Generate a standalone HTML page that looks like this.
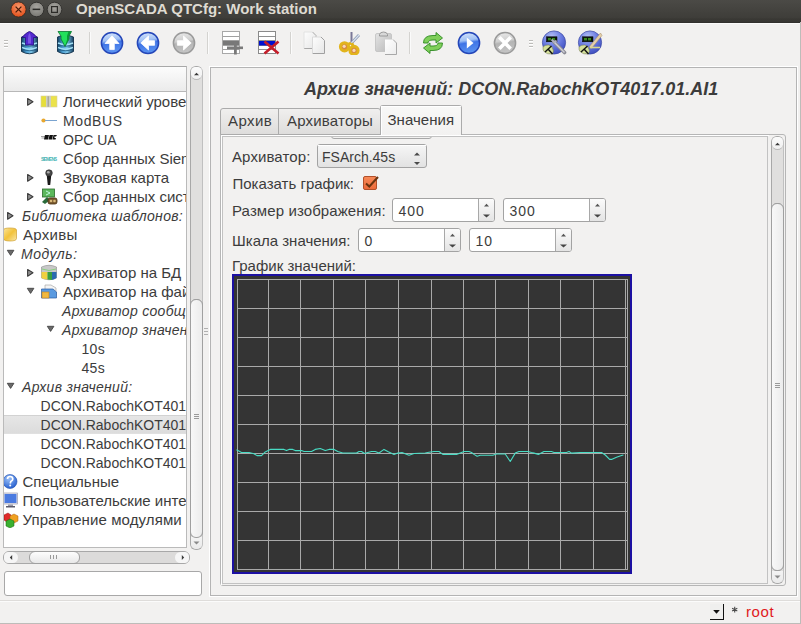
<!DOCTYPE html>
<html><head><meta charset="utf-8"><title>OpenSCADA QTCfg</title>
<style>
*{margin:0;padding:0;box-sizing:border-box}
html,body{width:801px;height:624px;overflow:hidden;background:#f2f1f0;font-family:"Liberation Sans",sans-serif;color:#3c3c3c;position:relative}
.a{position:absolute}
.t{position:absolute;white-space:nowrap}
</style></head><body>

<div class="a" style="left:0px;top:0px;width:801px;height:23px;background:linear-gradient(#4b4a46,#3e3d39 78%,#383733 82%,#3a3935 92%,#2f2e2b)"></div>
<div class="a" style="left:0px;top:23px;width:801px;height:1px;background:#fbfbfa"></div>
<svg class="a" style="left:0px;top:0px" width="70" height="22" viewBox="0 0 70 22">
<defs>
<radialGradient id="gc" cx="50%" cy="35%" r="60%"><stop offset="0" stop-color="#f99a6f"/><stop offset="1" stop-color="#e4531e"/></radialGradient>
<radialGradient id="gg" cx="50%" cy="35%" r="60%"><stop offset="0" stop-color="#a8a6a1"/><stop offset="1" stop-color="#7c7b76"/></radialGradient>
</defs>
<circle cx="18.5" cy="9.5" r="7.6" fill="url(#gc)" stroke="#3a2a22" stroke-width="0.9"/>
<path d="M15.6 6.6 L21.4 12.4 M21.4 6.6 L15.6 12.4" stroke="#4a1a08" stroke-width="1.3"/>
<circle cx="36.6" cy="9.5" r="7.3" fill="url(#gg)" stroke="#2e2d2a" stroke-width="0.9"/>
<rect x="32.6" y="8.6" width="7.6" height="1.5" fill="#2c2b28"/>
<circle cx="54.5" cy="9.5" r="7.3" fill="url(#gg)" stroke="#2e2d2a" stroke-width="0.9"/>
<rect x="51.6" y="6.6" width="5.8" height="5.8" fill="none" stroke="#2c2b28" stroke-width="1.2"/>
</svg>
<div class="t" style="left:76px;top:-1px;font-size:15px;line-height:19px;font-weight:bold;font-style:normal;color:#dfdbd2;letter-spacing:0px;">OpenSCADA QTCfg: Work station</div>
<div class="a" style="left:4px;top:40px;width:4px;height:1px;background:#bdbcb9"></div>
<div class="a" style="left:4px;top:41px;width:4px;height:1px;background:#ffffff"></div>
<div class="a" style="left:4px;top:43px;width:4px;height:1px;background:#bdbcb9"></div>
<div class="a" style="left:4px;top:44px;width:4px;height:1px;background:#ffffff"></div>
<div class="a" style="left:4px;top:46px;width:4px;height:1px;background:#bdbcb9"></div>
<div class="a" style="left:4px;top:47px;width:4px;height:1px;background:#ffffff"></div>
<div class="a" style="left:89px;top:32px;width:1px;height:22px;background:#d4d3d0"></div>
<div class="a" style="left:90px;top:32px;width:1px;height:22px;background:#fbfbfb"></div>
<div class="a" style="left:207px;top:32px;width:1px;height:22px;background:#d4d3d0"></div>
<div class="a" style="left:208px;top:32px;width:1px;height:22px;background:#fbfbfb"></div>
<div class="a" style="left:290px;top:32px;width:1px;height:22px;background:#d4d3d0"></div>
<div class="a" style="left:291px;top:32px;width:1px;height:22px;background:#fbfbfb"></div>
<div class="a" style="left:409px;top:32px;width:1px;height:22px;background:#d4d3d0"></div>
<div class="a" style="left:410px;top:32px;width:1px;height:22px;background:#fbfbfb"></div>
<div class="a" style="left:529px;top:40px;width:4px;height:1px;background:#bdbcb9"></div>
<div class="a" style="left:529px;top:41px;width:4px;height:1px;background:#ffffff"></div>
<div class="a" style="left:529px;top:43px;width:4px;height:1px;background:#bdbcb9"></div>
<div class="a" style="left:529px;top:44px;width:4px;height:1px;background:#ffffff"></div>
<div class="a" style="left:529px;top:46px;width:4px;height:1px;background:#bdbcb9"></div>
<div class="a" style="left:529px;top:47px;width:4px;height:1px;background:#ffffff"></div>
<svg class="a" style="left:20px;top:31px" width="19" height="24" viewBox="0 0 19 24">
<defs>
<linearGradient id="cyl1" x1="0" x2="1"><stop offset="0" stop-color="#123e5e"/><stop offset="0.3" stop-color="#4a9cd0"/><stop offset="0.6" stop-color="#7cc6ea"/><stop offset="1" stop-color="#143c5c"/></linearGradient>
</defs>
<path d="M1.5 6 Q9.5 2.5 17.5 6 L17.5 20.5 Q9.5 25 1.5 20.5 Z" fill="url(#cyl1)" stroke="#0e2e48" stroke-width="0.9"/>
<path d="M2 12 Q9.5 15.5 17 12 M2 16.5 Q9.5 20 17 16.5" stroke="#a4e0f6" stroke-width="1.4" fill="none"/>
<path d="M2 13.5 Q9.5 17 17 13.5 M2 18 Q9.5 21.5 17 18" stroke="#205a80" stroke-width="0.8" fill="none"/>
<path d="M9.5 0.3 Q13.5 2 17 6.5 L13.5 6.5 L13.5 14 L5.5 14 L5.5 6.5 L2 6.5 Q5.5 2 9.5 0.3 Z" fill="#5428d0" stroke="#24107a" stroke-width="0.8"/><path d="M9.5 2 Q8 4 8 7 L8 12.5 L11 12.5 L11 7 Q11 4 9.5 2 Z" fill="#9a7cf4" opacity="0.55"/></svg>
<svg class="a" style="left:56px;top:31px" width="19" height="24" viewBox="0 0 19 24">
<defs>
<linearGradient id="cyl2" x1="0" x2="1"><stop offset="0" stop-color="#123e5e"/><stop offset="0.3" stop-color="#4a9cd0"/><stop offset="0.6" stop-color="#7cc6ea"/><stop offset="1" stop-color="#143c5c"/></linearGradient>
</defs>
<path d="M1.5 6 Q9.5 2.5 17.5 6 L17.5 20.5 Q9.5 25 1.5 20.5 Z" fill="url(#cyl2)" stroke="#0e2e48" stroke-width="0.9"/>
<path d="M2 12 Q9.5 15.5 17 12 M2 16.5 Q9.5 20 17 16.5" stroke="#a4e0f6" stroke-width="1.4" fill="none"/>
<path d="M2 13.5 Q9.5 17 17 13.5 M2 18 Q9.5 21.5 17 18" stroke="#205a80" stroke-width="0.8" fill="none"/>
<path d="M2 0.5 L15.5 0.5 L13 5 L13 8 L9 15.5 L5 8 L5 5 Z" fill="#22e05c" stroke="#0c7030" stroke-width="0.8"/><path d="M9 15.5 L13 8 L13 5 L15.5 0.5 L12.5 0.5 L11 5 L11 9 Z" fill="#0c9838"/></svg>
<svg class="a" style="left:100px;top:31px" width="24" height="24" viewBox="0 0 24 24"><defs><linearGradient id="ci112" x1="0" x2="0.15" y1="0" y2="1"><stop offset="0" stop-color="#dce9fc"/><stop offset="0.42" stop-color="#9fc0f4"/><stop offset="0.55" stop-color="#3f74e6"/><stop offset="1" stop-color="#5a92f0"/></linearGradient></defs>
<circle cx="12" cy="12" r="10.6" fill="url(#ci112)" stroke="#2446b8" stroke-width="1.5"/><path d="M12 4.8 L19 12.5 L14.3 12.5 L14.3 18.6 L9.7 18.6 L9.7 12.5 L5 12.5 Z" fill="#ffffff" stroke="#ffffff" stroke-width="0.8" stroke-linejoin="round"/></svg>
<svg class="a" style="left:136px;top:31px" width="24" height="24" viewBox="0 0 24 24"><defs><linearGradient id="ci148" x1="0" x2="0.15" y1="0" y2="1"><stop offset="0" stop-color="#dce9fc"/><stop offset="0.42" stop-color="#9fc0f4"/><stop offset="0.55" stop-color="#3f74e6"/><stop offset="1" stop-color="#5a92f0"/></linearGradient></defs>
<circle cx="12" cy="12" r="10.6" fill="url(#ci148)" stroke="#2446b8" stroke-width="1.5"/><path d="M4.8 12 L12.5 5 L12.5 9.7 L18.6 9.7 L18.6 14.3 L12.5 14.3 L12.5 19 Z" fill="#ffffff" stroke="#ffffff" stroke-width="0.8" stroke-linejoin="round"/></svg>
<svg class="a" style="left:172px;top:31px" width="24" height="24" viewBox="0 0 24 24"><defs><linearGradient id="ci184" x1="0" x2="0.15" y1="0" y2="1"><stop offset="0" stop-color="#ececec"/><stop offset="0.45" stop-color="#cfcfcf"/><stop offset="0.55" stop-color="#b4b4b4"/><stop offset="1" stop-color="#c4c4c4"/></linearGradient></defs>
<circle cx="12" cy="12" r="10.6" fill="url(#ci184)" stroke="#9a9a9a" stroke-width="1.5"/><path d="M19.2 12 L11.5 5 L11.5 9.7 L5.4 9.7 L5.4 14.3 L11.5 14.3 L11.5 19 Z" fill="#ffffff" stroke="#ffffff" stroke-width="0.8" stroke-linejoin="round"/></svg>
<svg class="a" style="left:222px;top:31px" width="22" height="24" viewBox="0 0 22 24">
<rect x="0.5" y="0.5" width="17" height="22" fill="#ffffff" stroke="#a8a8a8" stroke-width="1"/>
<rect x="1" y="5" width="16" height="1" fill="#a0a0a0"/><rect x="1" y="9" width="16" height="1" fill="#a0a0a0"/>
<rect x="1" y="14" width="16" height="1" fill="#a0a0a0"/><rect x="1" y="18" width="16" height="1" fill="#a0a0a0"/>
<rect x="1" y="10" width="16" height="4" fill="#787878"/>
<rect x="5" y="15.5" width="16" height="2.6" fill="#7a7a7a"/>
<rect x="12" y="11.5" width="2.8" height="12" fill="#7a7a7a"/>
</svg>
<svg class="a" style="left:258px;top:31px" width="22" height="24" viewBox="0 0 22 24">
<rect x="0.5" y="0.5" width="17" height="22" fill="#ffffff" stroke="#8a8a8a" stroke-width="1"/>
<rect x="1" y="5" width="16" height="1" fill="#909090"/><rect x="1" y="9" width="16" height="1" fill="#909090"/>
<rect x="1" y="14" width="16" height="1" fill="#909090"/><rect x="1" y="18" width="16" height="1" fill="#909090"/>
<rect x="1" y="10" width="16" height="4.5" fill="#0010d0"/>
<path d="M6.5 10.5 L20.5 22.5 M20.5 10.5 L6.5 22.5" stroke="#c41e2a" stroke-width="2.6"/>
</svg>
<svg class="a" style="left:302px;top:31px" width="24" height="24" viewBox="0 0 24 24">
<defs><linearGradient id="pg1" x1="0" x2="1" y1="0" y2="1"><stop offset="0" stop-color="#fdfdfd"/><stop offset="1" stop-color="#e6e6e6"/></linearGradient></defs>
<path d="M2 1 L10.5 1 L14 4.5 L14 17.5 L2 17.5 Z" fill="url(#pg1)"/>
<path d="M10.5 1 L14 4.5 L14 17.5 L2 17.5" fill="none" stroke="#a8a8a8" stroke-width="1"/>
<path d="M2 17.5 L2 1 L10.5 1" fill="none" stroke="#e2e2e2" stroke-width="1"/>
<path d="M10.5 6 L19 6 L22.5 9.5 L22.5 22.5 L10.5 22.5 Z" fill="url(#pg1)"/>
<path d="M19 6 L22.5 9.5 L22.5 22.5 L10.5 22.5" fill="none" stroke="#a0a0a0" stroke-width="1"/>
<path d="M10.5 22.5 L10.5 6 L19 6" fill="none" stroke="#dadada" stroke-width="1"/>
</svg>
<svg class="a" style="left:338px;top:31px" width="24" height="24" viewBox="0 0 24 24">
<path d="M13.5 1 L13.5 12" stroke="#7a7898" stroke-width="2"/>
<path d="M21 4 L13.5 12" stroke="#8a96b0" stroke-width="2.8"/>
<path d="M21 4 L13.5 12" stroke="#d8e2f0" stroke-width="1.2"/>
<path d="M13 12 L9 14 M13.8 12 L15.5 16" stroke="#e0b21a" stroke-width="3"/>
<circle cx="6.5" cy="15.8" r="4.1" fill="#d88a40" stroke="#e2b41c" stroke-width="3"/>
<circle cx="16" cy="19.4" r="4.1" fill="#d88a40" stroke="#e2b41c" stroke-width="3"/>
<circle cx="6.2" cy="15.3" r="1.6" fill="#f6d8b8"/>
<circle cx="16" cy="19.4" r="1.6" fill="#f6d8b8"/>
</svg>
<svg class="a" style="left:374px;top:31px" width="24" height="24" viewBox="0 0 24 24">
<defs><linearGradient id="cbd" x1="0" x2="1" y1="0" y2="1"><stop offset="0" stop-color="#e4e4e4"/><stop offset="1" stop-color="#b8b8b8"/></linearGradient>
<linearGradient id="pg2" x1="0" x2="1" y1="0" y2="1"><stop offset="0" stop-color="#ffffff"/><stop offset="1" stop-color="#ececec"/></linearGradient></defs>
<rect x="1.5" y="2.5" width="16" height="18" rx="1.5" fill="url(#cbd)" stroke="#c0c0c0" stroke-width="0.8"/>
<path d="M5.5 5 L5.5 3.5 Q6 1 9.5 1 Q13 1 13.5 3.5 L13.5 5 Z" fill="#d8d8d8" stroke="#8a8a8a" stroke-width="0.8"/>
<path d="M11 8.5 L19 8.5 L22.5 12 L22.5 23.5 L11 23.5 Z" fill="url(#pg2)"/>
<path d="M19 8.5 L22.5 12 L22.5 23.5 L11 23.5" fill="none" stroke="#a8a8a8" stroke-width="1"/>
</svg>
<svg class="a" style="left:421px;top:31px" width="24" height="24" viewBox="0 0 24 24">
<path d="M2.5 12 Q2.5 4.5 12 4.5 L15 4.5 L15 1.5 L21.5 7 L15 12 L15 9 L12 9 Q7 9 7 12 Z" fill="#7fcf5a" stroke="#2f8a22" stroke-width="0.9"/>
<path d="M21.5 12 Q21.5 19.5 12 19.5 L9 19.5 L9 22.5 L2.5 17 L9 12 L9 15 L12 15 Q17 15 17 12 Z" fill="#7fcf5a" stroke="#2f8a22" stroke-width="0.9"/>
</svg>
<svg class="a" style="left:457px;top:31px" width="24" height="24" viewBox="0 0 24 24"><defs><linearGradient id="ci469" x1="0" x2="0.15" y1="0" y2="1"><stop offset="0" stop-color="#dce9fc"/><stop offset="0.42" stop-color="#9fc0f4"/><stop offset="0.55" stop-color="#3f74e6"/><stop offset="1" stop-color="#5a92f0"/></linearGradient></defs>
<circle cx="12" cy="12" r="10.6" fill="url(#ci469)" stroke="#2446b8" stroke-width="1.5"/><path d="M9.8 6.5 L16.5 12 L9.8 17.5 Z" fill="#ffffff"/></svg>
<svg class="a" style="left:493px;top:31px" width="24" height="24" viewBox="0 0 24 24"><defs><linearGradient id="ci505" x1="0" x2="0.15" y1="0" y2="1"><stop offset="0" stop-color="#ececec"/><stop offset="0.45" stop-color="#cfcfcf"/><stop offset="0.55" stop-color="#b4b4b4"/><stop offset="1" stop-color="#c4c4c4"/></linearGradient></defs>
<circle cx="12" cy="12" r="10.6" fill="url(#ci505)" stroke="#9a9a9a" stroke-width="1.5"/><path d="M7.6 7.6 L16.4 16.4 M16.4 7.6 L7.6 16.4" stroke="#ffffff" stroke-width="3.6" stroke-linecap="square"/></svg>
<svg class="a" style="left:541px;top:30px" width="26" height="26" viewBox="0 0 26 26"><defs><radialGradient id="bb541" cx="40%" cy="25%" r="75%"><stop offset="0" stop-color="#b4c0f4"/><stop offset="0.5" stop-color="#6f80e4"/><stop offset="1" stop-color="#4050c0"/></radialGradient></defs>
<circle cx="13" cy="12.5" r="11.6" fill="url(#bb541)" stroke="#3a46a0" stroke-width="0.7"/>
<rect x="5.5" y="6.8" width="10.5" height="5" fill="#0c1a0c" stroke="#000" stroke-width="0.5"/>
<rect x="7" y="8" width="3" height="2.4" fill="#3a8a20"/><rect x="11" y="8" width="3" height="2.4" fill="#3a8a20"/>
<path d="M2 17 Q4 14.5 8 15 Q12 16.5 12.5 21 L11.5 24 Q6 24.5 3.5 22 Q1.5 20 2 17 Z" fill="#d4e09a" stroke="#6a7040" stroke-width="0.5"/>
<path d="M4 22 L10.5 16 M7 19 L11.5 24" stroke="#111" stroke-width="1.4"/>
<path d="M13 12 L23.5 22.5" stroke="#8a8a94" stroke-width="3.6" stroke-linecap="round"/><path d="M13 12 L23.5 22.5" stroke="#d0d0d8" stroke-width="1.4"/><path d="M10.5 9.5 L13.5 12.5 L15.5 10.5" stroke="#b0b0c0" stroke-width="1.8" fill="none"/></svg>
<svg class="a" style="left:577px;top:30px" width="26" height="26" viewBox="0 0 26 26"><defs><radialGradient id="bb577" cx="40%" cy="25%" r="75%"><stop offset="0" stop-color="#b4c0f4"/><stop offset="0.5" stop-color="#6f80e4"/><stop offset="1" stop-color="#4050c0"/></radialGradient></defs>
<circle cx="13" cy="12.5" r="11.6" fill="url(#bb577)" stroke="#3a46a0" stroke-width="0.7"/>
<rect x="5.5" y="6.8" width="10.5" height="5" fill="#0c1a0c" stroke="#000" stroke-width="0.5"/>
<rect x="7" y="8" width="3" height="2.4" fill="#3a8a20"/><rect x="11" y="8" width="3" height="2.4" fill="#3a8a20"/>
<path d="M2 17 Q4 14.5 8 15 Q12 16.5 12.5 21 L11.5 24 Q6 24.5 3.5 22 Q1.5 20 2 17 Z" fill="#d4e09a" stroke="#6a7040" stroke-width="0.5"/>
<path d="M4 22 L10.5 16 M7 19 L11.5 24" stroke="#111" stroke-width="1.4"/>
<path d="M23.5 3 L12 17 L14.5 18.5 L25 5.5 Z" fill="#e6cfa8" stroke="#a08860" stroke-width="0.5"/><path d="M13 17.5 L23 17.5" stroke="#d8d890" stroke-width="1.6"/></svg>
<div class="a" style="left:3px;top:66px;width:184px;height:482px;background:#ffffff;border:1px solid #bababa;border-top-color:#a8a8a8"></div>
<div class="a" style="left:4px;top:67px;width:182px;height:24px;background:linear-gradient(#fcfcfc,#ebebeb)"></div>
<div class="a" style="left:4px;top:91px;width:182px;height:1px;background:#b8b8b8"></div>
<div class="a" style="left:4px;top:92px;width:182px;height:455px;overflow:hidden">
<div class="a" style="left:0px;top:323px;width:182px;height:19px;background:linear-gradient(#e6e6e6,#dcdcdc);border-top:1px solid #d2d2d2;border-bottom:1px solid #e0e0e0"></div>
<svg class="a" style="left:22px;top:5px" width="9" height="10" viewBox="0 0 9 10"><path d="M1.6 1.4 L7 4.8 L1.6 8.2 Z" fill="#8c8c8c" stroke="#383838" stroke-width="1.05" stroke-linejoin="round"/></svg>
<svg class="a" style="left:36px;top:3px" width="18" height="13" viewBox="0 0 18 13"><rect x="1" y="1" width="5" height="11" fill="#e6de3a"/><rect x="6" y="1" width="5" height="11" fill="#cfcfc0"/><rect x="11" y="1" width="6" height="11" fill="#ebe24a"/><rect x="7.5" y="1" width="1.5" height="11" fill="#a8a8a0"/><rect x="1" y="1" width="16" height="11" fill="none" stroke="#d8d0a0" stroke-width="0.6"/></svg>
<div class="t" style="left:59px;top:0px;font-size:15px;line-height:19px;font-weight:normal;font-style:normal;color:#3c3c3c;letter-spacing:0px;">Логический уровень</div>
<svg class="a" style="left:36px;top:24px" width="18" height="9" viewBox="0 0 18 9"><circle cx="3.5" cy="4.5" r="2.1" fill="#e8a830"/><line x1="5" y1="4.5" x2="17" y2="4.5" stroke="#7aa4d0" stroke-width="1"/></svg>
<div class="t" style="left:59px;top:20px;font-size:14px;line-height:18px;font-weight:normal;font-style:normal;color:#3c3c3c;letter-spacing:0.6px;">ModBUS</div>
<svg class="a" style="left:36px;top:41px" width="18" height="9" viewBox="0 0 18 9"><path d="M1 3.5 L5 3.5 M1.5 5 L5 5" stroke="#666" stroke-width="0.6"/><path d="M5 2 L9 2 L8 6.5 L4 6.5 Z M9.5 2 L13 2 L12 6.5 L8.5 6.5 Z M13.5 2 L17 2 L16 3.5 L14.5 3.5 L14.5 5 L16 5 L15.5 6.5 L12.5 6.5 Z" fill="#111"/></svg>
<div class="t" style="left:59px;top:39px;font-size:14px;line-height:18px;font-weight:normal;font-style:normal;color:#3c3c3c;letter-spacing:0px;">OPC UA</div>
<svg class="a" style="left:36px;top:62px" width="18" height="9" viewBox="0 0 18 9"><text x="1" y="6.5" font-family="Liberation Sans" font-weight="bold" font-size="4.6" fill="#48b4b4" textLength="16">SIEMENS</text></svg>
<div class="t" style="left:59px;top:57px;font-size:15px;line-height:19px;font-weight:normal;font-style:normal;color:#3c3c3c;letter-spacing:0px;">Сбор данных Siemens</div>
<svg class="a" style="left:22px;top:81px" width="9" height="10" viewBox="0 0 9 10"><path d="M1.6 1.4 L7 4.8 L1.6 8.2 Z" fill="#8c8c8c" stroke="#383838" stroke-width="1.05" stroke-linejoin="round"/></svg>
<svg class="a" style="left:40px;top:77px" width="10" height="17" viewBox="0 0 10 17"><ellipse cx="5" cy="4" rx="3.3" ry="3.2" fill="#4a4a4a" stroke="#222" stroke-width="0.6"/><ellipse cx="4.3" cy="3.2" rx="1.4" ry="1.3" fill="#a8a8a8"/><path d="M2.8 7 L7.2 7 L6.2 16 L3.8 16 Z" fill="#1a1a1a"/></svg>
<div class="t" style="left:59px;top:76px;font-size:15px;line-height:19px;font-weight:normal;font-style:normal;color:#3c3c3c;letter-spacing:0px;">Звуковая карта</div>
<svg class="a" style="left:22px;top:100px" width="9" height="10" viewBox="0 0 9 10"><path d="M1.6 1.4 L7 4.8 L1.6 8.2 Z" fill="#8c8c8c" stroke="#383838" stroke-width="1.05" stroke-linejoin="round"/></svg>
<svg class="a" style="left:37px;top:96px" width="17" height="17" viewBox="0 0 17 17"><rect x="1.5" y="1" width="12" height="8" fill="#5cb85c" stroke="#2a6a2a" stroke-width="0.8"/><path d="M5 3 L9 5 L5 7" stroke="#cfe" fill="none" stroke-width="0.9"/><path d="M1 14 L6 9 L9 12 L4 16 Z" fill="#2a6a3a"/><rect x="7" y="10" width="9" height="6" rx="2" fill="#7a5a30" stroke="#4a3010" stroke-width="0.8"/><circle cx="10" cy="13" r="1.3" fill="#d8b878"/><circle cx="13.5" cy="13" r="1.3" fill="#d8b878"/></svg>
<div class="t" style="left:59px;top:95px;font-size:15px;line-height:19px;font-weight:normal;font-style:normal;color:#3c3c3c;letter-spacing:0px;">Сбор данных системы</div>
<svg class="a" style="left:2px;top:119px" width="9" height="10" viewBox="0 0 9 10"><path d="M1.6 1.4 L7 4.8 L1.6 8.2 Z" fill="#8c8c8c" stroke="#383838" stroke-width="1.05" stroke-linejoin="round"/></svg>
<div class="t" style="left:18px;top:115px;font-size:14px;line-height:18px;font-weight:normal;font-style:italic;color:#3c3c3c;letter-spacing:0.3px;">Библиотека шаблонов:</div>
<svg class="a" style="left:-2px;top:135px" width="16" height="15" viewBox="0 0 16 15"><defs><linearGradient id="arc" x1="0" x2="1" y1="0" y2="1"><stop offset="0" stop-color="#fbe49a"/><stop offset="0.5" stop-color="#f2c23a"/><stop offset="1" stop-color="#f9e6a8"/></linearGradient></defs><path d="M1.5 3 Q1.5 1 8 1 Q14.5 1 14.5 3 L14.5 11.5 Q14.5 14 8 14 Q1.5 14 1.5 11.5 Z" fill="url(#arc)" stroke="#d0a030" stroke-width="0.7"/></svg>
<div class="t" style="left:19px;top:133px;font-size:15px;line-height:19px;font-weight:normal;font-style:normal;color:#3c3c3c;letter-spacing:0.3px;">Архивы</div>
<svg class="a" style="left:2px;top:157px" width="9" height="8" viewBox="0 0 9 8"><path d="M1.3 1.3 L7.9 1.3 L4.6 6.4 Z" fill="#6a6a6a" stroke="#454545" stroke-width="0.9" stroke-linejoin="round"/></svg>
<div class="t" style="left:17px;top:153px;font-size:14px;line-height:18px;font-weight:normal;font-style:italic;color:#3c3c3c;letter-spacing:0.5px;">Модуль:</div>
<svg class="a" style="left:22px;top:176px" width="9" height="10" viewBox="0 0 9 10"><path d="M1.6 1.4 L7 4.8 L1.6 8.2 Z" fill="#8c8c8c" stroke="#383838" stroke-width="1.05" stroke-linejoin="round"/></svg>
<svg class="a" style="left:36px;top:172px" width="18" height="17" viewBox="0 0 18 17"><path d="M1.5 3 Q9 -0.5 16.5 3 L16.5 14 Q9 17.5 1.5 14 Z" fill="#c8c8c8" stroke="#888" stroke-width="0.6"/><path d="M1.5 8 L7.5 8 L7.5 15.5 Q3 15 1.5 14 Z" fill="#f0d040"/><path d="M7.5 8 L12 8 L12 16 L7.5 15.5 Z" fill="#3aa040"/><path d="M12 8 L16.5 8 L16.5 14 Q14 15.5 12 16 Z" fill="#2a6ab0"/><path d="M2 5 Q9 8 16 5" stroke="#8ad080" stroke-width="1" fill="none"/></svg>
<div class="t" style="left:59px;top:171px;font-size:15px;line-height:19px;font-weight:normal;font-style:normal;color:#3c3c3c;letter-spacing:0px;">Архиватор на БД</div>
<svg class="a" style="left:22px;top:195px" width="9" height="8" viewBox="0 0 9 8"><path d="M1.3 1.3 L7.9 1.3 L4.6 6.4 Z" fill="#6a6a6a" stroke="#454545" stroke-width="0.9" stroke-linejoin="round"/></svg>
<svg class="a" style="left:36px;top:191px" width="18" height="17" viewBox="0 0 18 17"><path d="M5 2 L11 2 L16 5 L16 12 L5 12 Z" fill="#f4f4f4" stroke="#9a9a9a" stroke-width="0.6"/><path d="M1.5 6 L13 6 L16.5 9 L16.5 15 L1.5 15 Z" fill="#5a9ae0" stroke="#2a5aa0" stroke-width="0.7"/><rect x="2" y="9" width="7" height="6" fill="#f0b840" stroke="#c08020" stroke-width="0.6"/></svg>
<div class="t" style="left:59px;top:190px;font-size:15px;line-height:19px;font-weight:normal;font-style:normal;color:#3c3c3c;letter-spacing:0px;">Архиватор на файлы</div>
<div class="t" style="left:58px;top:210px;font-size:14px;line-height:18px;font-weight:normal;font-style:italic;color:#3c3c3c;letter-spacing:0.3px;">Архиватор сообщений</div>
<svg class="a" style="left:42px;top:233px" width="9" height="8" viewBox="0 0 9 8"><path d="M1.3 1.3 L7.9 1.3 L4.6 6.4 Z" fill="#6a6a6a" stroke="#454545" stroke-width="0.9" stroke-linejoin="round"/></svg>
<div class="t" style="left:58px;top:229px;font-size:14px;line-height:18px;font-weight:normal;font-style:italic;color:#3c3c3c;letter-spacing:0.3px;">Архиватор значений</div>
<div class="t" style="left:77.5px;top:248px;font-size:14px;line-height:18px;font-weight:normal;font-style:normal;color:#3c3c3c;letter-spacing:0.3px;">10s</div>
<div class="t" style="left:77.5px;top:267px;font-size:14px;line-height:18px;font-weight:normal;font-style:normal;color:#3c3c3c;letter-spacing:0.3px;">45s</div>
<svg class="a" style="left:2px;top:290px" width="9" height="8" viewBox="0 0 9 8"><path d="M1.3 1.3 L7.9 1.3 L4.6 6.4 Z" fill="#6a6a6a" stroke="#454545" stroke-width="0.9" stroke-linejoin="round"/></svg>
<div class="t" style="left:18px;top:286px;font-size:14px;line-height:18px;font-weight:normal;font-style:italic;color:#3c3c3c;letter-spacing:0.3px;">Архив значений:</div>
<div class="t" style="left:36.6px;top:305px;font-size:14px;line-height:18px;font-weight:normal;font-style:normal;color:#3c3c3c;letter-spacing:0px;">DCON.RabochKOT4017.01.AI0</div>
<div class="t" style="left:36.6px;top:324px;font-size:14px;line-height:18px;font-weight:normal;font-style:normal;color:#3c3c3c;letter-spacing:0px;">DCON.RabochKOT4017.01.AI1</div>
<div class="t" style="left:36.6px;top:343px;font-size:14px;line-height:18px;font-weight:normal;font-style:normal;color:#3c3c3c;letter-spacing:0px;">DCON.RabochKOT4017.01.AI2</div>
<div class="t" style="left:36.6px;top:362px;font-size:14px;line-height:18px;font-weight:normal;font-style:normal;color:#3c3c3c;letter-spacing:0px;">DCON.RabochKOT4017.01.AI3</div>
<svg class="a" style="left:-2px;top:381px" width="16" height="16" viewBox="0 0 16 16"><defs><radialGradient id="hlp" cx="40%" cy="30%" r="70%"><stop offset="0" stop-color="#9ac0f8"/><stop offset="1" stop-color="#2a62d0"/></radialGradient></defs><circle cx="8" cy="8.5" r="7" fill="url(#hlp)" stroke="#2050b0" stroke-width="0.6"/><path d="M5.5 6 Q5.5 3.5 8 3.5 Q10.8 3.5 10.8 6 Q10.8 7.5 8.8 8.5 L8.2 10.5" stroke="#fff" stroke-width="1.7" fill="none"/><circle cx="8.2" cy="12.6" r="1" fill="#fff"/></svg>
<div class="t" style="left:18.5px;top:380px;font-size:15px;line-height:19px;font-weight:normal;font-style:normal;color:#3c3c3c;letter-spacing:0px;">Специальные</div>
<svg class="a" style="left:-2px;top:400px" width="17" height="17" viewBox="0 0 17 17"><rect x="1.5" y="1" width="14" height="11" fill="#e8e8f0" stroke="#8a8aa0" stroke-width="0.6"/><rect x="2.5" y="2" width="12" height="9" fill="#4a7ae0"/><rect x="6" y="12.5" width="5" height="1.5" fill="#9a9aa8"/><rect x="4" y="14" width="9" height="1.5" fill="#5a5a6a"/></svg>
<div class="t" style="left:18.5px;top:399px;font-size:15px;line-height:19px;font-weight:normal;font-style:normal;color:#3c3c3c;letter-spacing:0px;">Пользовательские интерфейсы</div>
<svg class="a" style="left:-2px;top:419px" width="17" height="17" viewBox="0 0 17 17"><path d="M2 4 L6 2 L9 4 L9 9 L5 11 L2 9 Z" fill="#e02a2a" stroke="#901010" stroke-width="0.5"/><path d="M8 5 L12 3 L16 5 L16 10 L12 12 L8 10 Z" fill="#f0a020" stroke="#b06010" stroke-width="0.5"/><path d="M4 10 L8 8 L12 10 L12 15 L8 17 L4 15 Z" fill="#3ab030" stroke="#1a6010" stroke-width="0.5"/></svg>
<div class="t" style="left:18.5px;top:418px;font-size:15px;line-height:19px;font-weight:normal;font-style:normal;color:#3c3c3c;letter-spacing:0.1px;">Управление модулями</div>
</div>
<div class="a" style="left:190px;top:66px;width:13px;height:484px;background:#e0dfde;border:1px solid #a8a8a8;border-right-color:#c0c0c0;border-radius:6px"></div>
<div class="a" style="left:191px;top:67px;width:11px;height:13px;background:linear-gradient(#fbfbfb,#f0f0f0);border-radius:5px 5px 6px 6px;border-bottom:1px solid #b8b8b8"></div>
<svg class="a" style="left:193px;top:72px" width="7" height="4" viewBox="0 0 7 4"><path d="M1 3.2 L3.5 0.8 L6 3.2 Z" fill="#3a3a3a"/></svg>
<div class="a" style="left:190px;top:299px;width:13px;height:239px;background:linear-gradient(90deg,#f8f8f8,#ececec);border:1px solid #a0a0a0;border-radius:6px"></div>
<div class="a" style="left:194px;top:414px;width:5px;height:1px;background:#9a9a9a"></div>
<div class="a" style="left:194px;top:416px;width:5px;height:1px;background:#9a9a9a"></div>
<div class="a" style="left:194px;top:418px;width:5px;height:1px;background:#9a9a9a"></div>
<div class="a" style="left:191px;top:537px;width:11px;height:12px;background:linear-gradient(#f4f4f4,#eaeaea);border-radius:0 0 5px 5px"></div>
<div class="a" style="left:190px;top:299px;width:13px;height:239px;background:linear-gradient(90deg,#f8f8f8,#ececec);border:1px solid #a0a0a0;border-radius:6px"></div>
<div class="a" style="left:194px;top:414px;width:5px;height:1px;background:#9a9a9a"></div>
<div class="a" style="left:194px;top:416px;width:5px;height:1px;background:#9a9a9a"></div>
<div class="a" style="left:194px;top:418px;width:5px;height:1px;background:#9a9a9a"></div>
<svg class="a" style="left:193px;top:541px" width="7" height="4" viewBox="0 0 7 4"><path d="M0.5 0.5 L6.5 0.5 L3.5 3.5 Z" fill="#8a8a8a"/></svg>
<div class="a" style="left:204px;top:328px;width:4px;height:1px;background:#b0b0b0"></div>
<div class="a" style="left:204px;top:331px;width:4px;height:1px;background:#b0b0b0"></div>
<div class="a" style="left:204px;top:334px;width:4px;height:1px;background:#b0b0b0"></div>
<div class="a" style="left:3px;top:551px;width:187px;height:13px;background:#dcdbda;border:1px solid #a8a8a8;border-radius:6px"></div>
<div class="a" style="left:4px;top:552px;width:14px;height:11px;background:#f6f6f6;border-radius:5px 6px 6px 5px"></div>
<svg class="a" style="left:9px;top:554px" width="4" height="7" viewBox="0 0 4 7"><path d="M3.2 1 L0.8 3.5 L3.2 6 Z" fill="#3a3a3a"/></svg>
<div class="a" style="left:175px;top:552px;width:14px;height:11px;background:#f6f6f6;border-radius:6px 5px 5px 6px"></div>
<svg class="a" style="left:181px;top:554px" width="4" height="7" viewBox="0 0 4 7"><path d="M0.8 1 L3.2 3.5 L0.8 6 Z" fill="#3a3a3a"/></svg>
<div class="a" style="left:29px;top:551px;width:51px;height:13px;background:linear-gradient(#fdfdfd,#e8e8e8);border:1px solid #a0a0a0;border-radius:6px"></div>
<div class="a" style="left:50px;top:555px;width:1px;height:4px;background:#9a9a9a"></div>
<div class="a" style="left:53px;top:555px;width:1px;height:4px;background:#9a9a9a"></div>
<div class="a" style="left:56px;top:555px;width:1px;height:4px;background:#9a9a9a"></div>
<div class="a" style="left:4px;top:571px;width:198px;height:25px;background:#ffffff;border:1px solid #a8a8a8;border-radius:3px"></div>
<div class="a" style="left:209px;top:66px;width:589px;height:531px;border:1px solid #ffffff"></div>
<div class="a" style="left:210px;top:67px;width:587px;height:529px;border:1px solid #b4b4b4"></div>
<div class="t" style="left:304px;top:78px;font-size:18px;line-height:22px;font-weight:bold;font-style:italic;color:#3c3c3c;letter-spacing:0px;">Архив значений: DCON.RabochKOT4017.01.AI1</div>
<div class="a" style="left:220px;top:134px;width:566px;height:452px;border:1px solid #b6b6b6;border-radius:0 3px 3px 3px;background:#f2f1f0"></div>
<div class="a" style="left:220px;top:108px;width:59px;height:27px;background:linear-gradient(#f0efee,#dedddc);border:1px solid #ababab;border-radius:3px 0 0 0"></div>
<div class="a" style="left:278px;top:108px;width:103px;height:27px;background:linear-gradient(#f0efee,#dedddc);border:1px solid #ababab;border-radius:0 3px 0 0"></div>
<div class="a" style="left:380px;top:105px;width:82px;height:31px;background:linear-gradient(#f8f8f7,#f2f1f0);border:1px solid #ababab;border-bottom:none;border-radius:3px 3px 0 0"></div>
<div class="a" style="left:381px;top:106px;width:80px;height:1px;background:#ffffff"></div>
<div class="a" style="left:381px;top:106px;width:1px;height:29px;background:#ffffff"></div>
<div class="t" style="left:228px;top:111px;font-size:15px;line-height:19px;font-weight:normal;font-style:normal;color:#3c3c3c;letter-spacing:0.45px;">Архив</div>
<div class="t" style="left:287px;top:111px;font-size:15px;line-height:19px;font-weight:normal;font-style:normal;color:#3c3c3c;letter-spacing:0.2px;">Архиваторы</div>
<div class="t" style="left:387.5px;top:110px;font-size:15px;line-height:19px;font-weight:normal;font-style:normal;color:#3c3c3c;letter-spacing:0.05px;">Значения</div>
<div class="a" style="left:221px;top:135px;width:548px;height:450px;border-left:1px solid #ffffff;border-top:1px solid #ffffff"></div>
<div class="a" style="left:222px;top:136px;width:546px;height:448px;border:1px solid #c2c2c2"></div>
<div class="a" style="left:771px;top:136px;width:13px;height:448px;background:#e0dfde;border:1px solid #a8a8a8;border-right-color:#c0c0c0;border-radius:6px"></div>
<div class="a" style="left:772px;top:137px;width:11px;height:13px;background:linear-gradient(#fbfbfb,#f0f0f0);border-radius:5px 5px 6px 6px;border-bottom:1px solid #b8b8b8"></div>
<svg class="a" style="left:774px;top:142px" width="7" height="4" viewBox="0 0 7 4"><path d="M1 3.2 L3.5 0.8 L6 3.2 Z" fill="#3a3a3a"/></svg>
<div class="a" style="left:771px;top:203px;width:13px;height:368px;background:linear-gradient(90deg,#f8f8f8,#ececec);border:1px solid #a0a0a0;border-radius:6px"></div>
<div class="a" style="left:775px;top:383px;width:5px;height:1px;background:#9a9a9a"></div>
<div class="a" style="left:775px;top:385px;width:5px;height:1px;background:#9a9a9a"></div>
<div class="a" style="left:775px;top:387px;width:5px;height:1px;background:#9a9a9a"></div>
<div class="a" style="left:772px;top:571px;width:11px;height:12px;background:linear-gradient(#f4f4f4,#eaeaea);border-radius:0 0 5px 5px"></div>
<div class="a" style="left:771px;top:203px;width:13px;height:368px;background:linear-gradient(90deg,#f8f8f8,#ececec);border:1px solid #a0a0a0;border-radius:6px"></div>
<div class="a" style="left:775px;top:383px;width:5px;height:1px;background:#9a9a9a"></div>
<div class="a" style="left:775px;top:385px;width:5px;height:1px;background:#9a9a9a"></div>
<div class="a" style="left:775px;top:387px;width:5px;height:1px;background:#9a9a9a"></div>
<svg class="a" style="left:774px;top:575px" width="7" height="4" viewBox="0 0 7 4"><path d="M0.5 0.5 L6.5 0.5 L3.5 3.5 Z" fill="#8a8a8a"/></svg>
<div class="a" style="left:223px;top:137px;width:544px;height:446px;overflow:hidden">
<div class="a" style="left:108px;top:-17px;width:101px;height:19px;border:1px solid #a8a8a8;border-radius:3px;background:#f2f1f0"></div>
<div class="t" style="left:9px;top:10px;font-size:15px;line-height:19px;font-weight:normal;font-style:normal;color:#3c3c3c;letter-spacing:0.1px;">Архиватор:</div>
<div class="a" style="left:94px;top:7px;width:110px;height:24px;background:linear-gradient(#f6f6f6,#e2e2e2);border:1px solid #a3a3a3;border-radius:3px"></div>
<div class="a" style="left:95px;top:8px;width:108px;height:1px;background:#ffffff"></div>
<div class="t" style="left:99px;top:11px;font-size:14px;line-height:18px;font-weight:normal;font-style:normal;color:#3c3c3c;letter-spacing:0px;">FSArch.45s</div>
<svg class="a" style="left:190px;top:15px" width="8" height="14" viewBox="0 0 8 14"><path d="M1 3.5 L4 0.5 L7 3.5 Z" fill="#4a4a4a"/><path d="M1 10 L4 13 L7 10 Z" fill="#4a4a4a"/></svg>
<div class="t" style="left:9.5px;top:37px;font-size:15px;line-height:19px;font-weight:normal;font-style:normal;color:#3c3c3c;letter-spacing:0px;">Показать график:</div>
<svg class="a" style="left:138px;top:38px" width="19" height="17" viewBox="0 0 19 17"><defs><linearGradient id="cb" x1="0" x2="0" y1="0" y2="1"><stop offset="0" stop-color="#f78a58"/><stop offset="1" stop-color="#ec6a3a"/></linearGradient></defs><rect x="2.5" y="1.5" width="13" height="13" rx="1.5" fill="url(#cb)" stroke="#b2502a" stroke-width="1"/><path d="M5 8.5 L8.3 11.5 L17 2" stroke="#6a3410" stroke-width="2" fill="none"/></svg>
<div class="t" style="left:9px;top:64px;font-size:15px;line-height:19px;font-weight:normal;font-style:normal;color:#3c3c3c;letter-spacing:0.1px;">Размер изображения:</div>
<div class="a" style="left:169px;top:61px;width:103px;height:24px;background:#ffffff;border:1px solid #a3a3a3;border-radius:3px"></div>
<div class="a" style="left:255px;top:62px;width:16px;height:22px;background:linear-gradient(#fbfbfb,#e4e4e4);border-left:1px solid #a8a8a8;border-radius:0 2px 2px 0"></div>
<svg class="a" style="left:260px;top:66px" width="7" height="4" viewBox="0 0 7 4"><path d="M1 3.5 L3.5 0.8 L6 3.5 Z" fill="#555"/></svg>
<svg class="a" style="left:259px;top:77px" width="9" height="4" viewBox="0 0 9 4"><path d="M1 0.5 L8 0.5 L4.5 3.5 Z" fill="#444"/></svg>
<div class="t" style="left:175.5px;top:65px;font-size:14px;line-height:18px;font-weight:normal;font-style:normal;color:#3c3c3c;letter-spacing:1px;">400</div>
<div class="a" style="left:280px;top:61px;width:103px;height:24px;background:#ffffff;border:1px solid #a3a3a3;border-radius:3px"></div>
<div class="a" style="left:366px;top:62px;width:16px;height:22px;background:linear-gradient(#fbfbfb,#e4e4e4);border-left:1px solid #a8a8a8;border-radius:0 2px 2px 0"></div>
<svg class="a" style="left:371px;top:66px" width="7" height="4" viewBox="0 0 7 4"><path d="M1 3.5 L3.5 0.8 L6 3.5 Z" fill="#555"/></svg>
<svg class="a" style="left:370px;top:77px" width="9" height="4" viewBox="0 0 9 4"><path d="M1 0.5 L8 0.5 L4.5 3.5 Z" fill="#444"/></svg>
<div class="t" style="left:286.5px;top:65px;font-size:14px;line-height:18px;font-weight:normal;font-style:normal;color:#3c3c3c;letter-spacing:1px;">300</div>
<div class="t" style="left:9px;top:94px;font-size:15px;line-height:19px;font-weight:normal;font-style:normal;color:#3c3c3c;letter-spacing:0px;">Шкала значения:</div>
<div class="a" style="left:135px;top:91px;width:103px;height:24px;background:#ffffff;border:1px solid #a3a3a3;border-radius:3px"></div>
<div class="a" style="left:221px;top:92px;width:16px;height:22px;background:linear-gradient(#fbfbfb,#e4e4e4);border-left:1px solid #a8a8a8;border-radius:0 2px 2px 0"></div>
<svg class="a" style="left:226px;top:96px" width="7" height="4" viewBox="0 0 7 4"><path d="M1 3.5 L3.5 0.8 L6 3.5 Z" fill="#555"/></svg>
<svg class="a" style="left:225px;top:107px" width="9" height="4" viewBox="0 0 9 4"><path d="M1 0.5 L8 0.5 L4.5 3.5 Z" fill="#444"/></svg>
<div class="t" style="left:141.5px;top:95px;font-size:14px;line-height:18px;font-weight:normal;font-style:normal;color:#3c3c3c;letter-spacing:1px;">0</div>
<div class="a" style="left:246px;top:91px;width:103px;height:24px;background:#ffffff;border:1px solid #a3a3a3;border-radius:3px"></div>
<div class="a" style="left:332px;top:92px;width:16px;height:22px;background:linear-gradient(#fbfbfb,#e4e4e4);border-left:1px solid #a8a8a8;border-radius:0 2px 2px 0"></div>
<svg class="a" style="left:337px;top:96px" width="7" height="4" viewBox="0 0 7 4"><path d="M1 3.5 L3.5 0.8 L6 3.5 Z" fill="#555"/></svg>
<svg class="a" style="left:336px;top:107px" width="9" height="4" viewBox="0 0 9 4"><path d="M1 0.5 L8 0.5 L4.5 3.5 Z" fill="#444"/></svg>
<div class="t" style="left:252.5px;top:95px;font-size:14px;line-height:18px;font-weight:normal;font-style:normal;color:#3c3c3c;letter-spacing:1px;">10</div>
<div class="t" style="left:9px;top:119px;font-size:15px;line-height:19px;font-weight:normal;font-style:normal;color:#3c3c3c;letter-spacing:0px;">График значений:</div>
<svg class="a" style="left:9px;top:137px" width="400" height="300" viewBox="0 0 400 300"><rect x="0" y="0" width="400" height="300" fill="#1c10a2"/><rect x="2" y="2" width="396" height="296" fill="#343434"/><rect x="5" y="5" width="1" height="291" fill="#a9a9a9"/><rect x="36" y="5" width="1" height="291" fill="#a9a9a9"/><rect x="68" y="5" width="1" height="291" fill="#a9a9a9"/><rect x="101" y="5" width="1" height="291" fill="#a9a9a9"/><rect x="133" y="5" width="1" height="291" fill="#a9a9a9"/><rect x="166" y="5" width="1" height="291" fill="#a9a9a9"/><rect x="199" y="5" width="1" height="291" fill="#a9a9a9"/><rect x="231" y="5" width="1" height="291" fill="#a9a9a9"/><rect x="263" y="5" width="1" height="291" fill="#a9a9a9"/><rect x="296" y="5" width="1" height="291" fill="#a9a9a9"/><rect x="328" y="5" width="1" height="291" fill="#a9a9a9"/><rect x="361" y="5" width="1" height="291" fill="#a9a9a9"/><rect x="393" y="5" width="1" height="291" fill="#a9a9a9"/><rect x="395" y="5" width="1" height="291" fill="#a9a9a9"/><rect x="5" y="5" width="391" height="1" fill="#a9a9a9"/><rect x="5" y="34" width="391" height="1" fill="#a9a9a9"/><rect x="5" y="63" width="391" height="1" fill="#a9a9a9"/><rect x="5" y="92" width="391" height="1" fill="#a9a9a9"/><rect x="5" y="121" width="391" height="1" fill="#a9a9a9"/><rect x="5" y="150" width="391" height="1" fill="#a9a9a9"/><rect x="5" y="179" width="391" height="1" fill="#a9a9a9"/><rect x="5" y="208" width="391" height="1" fill="#a9a9a9"/><rect x="5" y="237" width="391" height="1" fill="#a9a9a9"/><rect x="5" y="266" width="391" height="1" fill="#a9a9a9"/><rect x="5" y="295" width="391" height="1" fill="#a9a9a9"/><path d="M4.50 175.75 L9.50 178.50 L17.00 178.50 L22.00 179.75 L25.00 181.60 L29.50 181.60 L33.25 177.90 L38.25 175.40 L52.00 175.40 L54.50 176.60 L57.00 175.40 L60.75 175.40 L63.25 176.60 L69.50 176.60 L72.00 177.50 L79.50 177.50 L83.25 175.40 L88.25 174.50 L93.25 176.60 L97.00 175.40 L102.00 175.40 L105.75 177.50 L110.75 179.00 L124.50 179.00 L127.00 177.50 L129.50 177.50 L132.60 179.50 L135.75 178.50 L139.50 177.50 L143.25 177.50 L147.00 179.00 L152.00 175.40 L155.75 177.50 L162.00 180.40 L165.75 179.10 L170.00 178.50 L177.00 181.25 L182.00 179.50 L193.25 179.00 L197.00 178.25 L202.00 177.50 L207.00 177.50 L210.75 180.40 L213.25 180.40 L224.50 180.40 L229.50 178.50 L232.00 177.50 L237.00 177.50 L239.50 178.50 L242.00 180.40 L245.10 182.25 L248.25 181.25 L260.75 181.25 L264.50 180.00 L273.25 180.00 L278.25 187.50 L283.25 179.10 L287.00 177.50 L295.75 177.50 L299.50 178.50 L302.00 179.10 L306.40 180.40 L312.00 177.50 L319.50 177.50 L322.00 178.50 L334.50 178.50 L337.00 177.50 L339.50 179.10 L348.25 178.50 L369.50 178.50 L373.25 181.00 L377.60 185.40 L379.50 185.40 L384.50 183.25 L389.50 181.60 L391.40 181.00" fill="none" stroke="#48dcc4" stroke-width="1.1" stroke-linejoin="round"/></svg>
</div>
<div class="a" style="left:0px;top:600px;width:801px;height:1px;background:#dedcda"></div>
<div class="a" style="left:0px;top:601px;width:801px;height:1px;background:#fbfbfb"></div>
<div class="a" style="left:0px;top:623px;width:801px;height:1px;background:#bdbcb9"></div>
<div class="a" style="left:800px;top:22px;width:1px;height:602px;background:#bdbcb9"></div>
<div class="a" style="left:710px;top:604px;width:14px;height:16px;background:#efefee;border-right:1px solid #111;border-bottom:1px solid #111"></div>
<svg class="a" style="left:712px;top:609px" width="9" height="6" viewBox="0 0 9 6"><path d="M1.2 1 L7.8 1 L4.5 4.8 Z" fill="#111"/></svg>
<svg class="a" style="left:731px;top:606px" width="8" height="8" viewBox="0 0 8 8"><path d="M3.7 0.8 L3.7 6.4 M1.1 2.2 L6.3 5 M1.1 5 L6.3 2.2" stroke="#4a4a4a" stroke-width="1.1"/></svg>
<div class="t" style="left:746px;top:602px;font-size:15px;line-height:19px;font-weight:normal;font-style:normal;color:#e0191c;letter-spacing:0.6px;">root</div>
</body></html>
